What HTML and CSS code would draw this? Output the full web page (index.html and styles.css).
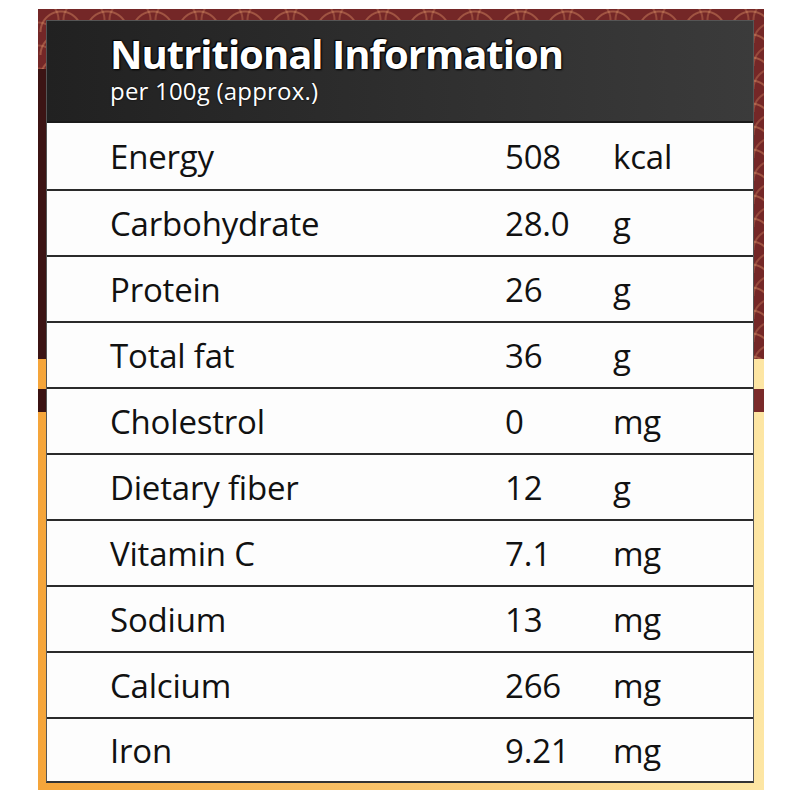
FILE: index.html
```html
<!DOCTYPE html>
<html>
<head>
<meta charset="utf-8">
<link rel="stylesheet" href="styles.css">
</head>
<body>
<div class="frame">
  <div class="card">
    <div class="header">
      <div class="title">Nutritional Information</div>
      <div class="subtitle">per 100g (approx.)</div>
    </div>
    <div class="rows">
      <div class="row first"><span>Energy</span><span>508</span><span>kcal</span></div>
      <div class="row"><span>Carbohydrate</span><span>28.0</span><span>g</span></div>
      <div class="row"><span>Protein</span><span>26</span><span>g</span></div>
      <div class="row"><span>Total fat</span><span>36</span><span>g</span></div>
      <div class="row"><span>Cholestrol</span><span>0</span><span>mg</span></div>
      <div class="row"><span>Dietary fiber</span><span>12</span><span>g</span></div>
      <div class="row"><span>Vitamin C</span><span>7.1</span><span>mg</span></div>
      <div class="row"><span>Sodium</span><span>13</span><span>mg</span></div>
      <div class="row"><span>Calcium</span><span>266</span><span>mg</span></div>
      <div class="row last"><span>Iron</span><span>9.21</span><span>mg</span></div>
    </div>
  </div>
</div>
</body>
</html>
```
FILE: styles.css
```css
html, body {
  margin: 0;
  padding: 0;
  background: #ffffff;
}
body {
  width: 800px;
  height: 800px;
  font-family: "Open Sans", "Noto Sans", sans-serif;
}
.frame {
  position: relative;
  margin: 9px 0 0 38px;
  width: 726px;
  height: 781px;
  box-sizing: border-box;
  padding: 11px 10px 7px 8px;
  background: linear-gradient(to right, #f5a53a 0%, #f9c46c 50%, #fde6a4 100%);
}
.frame::before {
  content: "";
  position: absolute;
  left: 0;
  top: 0;
  right: 0;
  height: 350px;
  background:
    linear-gradient(to bottom, transparent 0px, transparent 60px, #3c1414 60px) 0 0 / 8px 100% no-repeat,
    radial-gradient(circle at 50% 100%, transparent 19px, rgba(214,140,100,.45) 20px, rgba(214,140,100,.45) 21px, transparent 22px) 0 0 / 46px 23px repeat,
    radial-gradient(circle at 50% 100%, transparent 19px, rgba(214,140,100,.35) 20px, rgba(214,140,100,.35) 21px, transparent 22px) 23px 11px / 46px 23px repeat,
    #742727;
}
.frame::after {
  content: "";
  position: absolute;
  left: 0;
  right: 0;
  top: 380px;
  height: 23px;
  background: linear-gradient(to right, #3b1313 0px, #3b1313 8px, #7a2a2a 8px, #7a2a2a 100%);
}
.card {
  position: relative;
  z-index: 1;
  height: 763px;
  background: #fdfdfd;
  border: 1px solid #555;
  border-bottom: 2px solid #333;
  box-sizing: border-box;
  display: flex;
  flex-direction: column;
}
.header {
  height: 102px;
  box-sizing: border-box;
  padding: 11px 0 0 63px;
  background: linear-gradient(to right, #212121 0%, #2e2e2e 50%, #3b3b3b 100%);
  border-bottom: 2px solid #1a1a1a;
  color: #fff;
}
.title {
  font-size: 40px;
  font-weight: 700;
  line-height: 44px;
  letter-spacing: -1px;
  text-shadow: 0 0 2px #000, 1px 1px 2px #000, -1px -1px 1px #000;
}
.subtitle {
  margin-top: 2px;
  font-size: 24px;
  line-height: 26px;
  letter-spacing: 0.2px;
  text-shadow: 0 0 2px #000;
}
.rows {
  flex: 1;
  display: flex;
  flex-direction: column;
}
.row {
  display: grid;
  grid-template-columns: 395px 108px 1fr;
  align-items: center;
  height: 66px;
  box-sizing: border-box;
  padding-left: 63px;
  border-bottom: 2px solid #2a2a2a;
  font-size: 33px;
  color: #111;
  letter-spacing: -0.2px;
}
.row.first {
  height: 68px;
}
.row.last {
  border-bottom: none;
  flex: 1;
}
```
